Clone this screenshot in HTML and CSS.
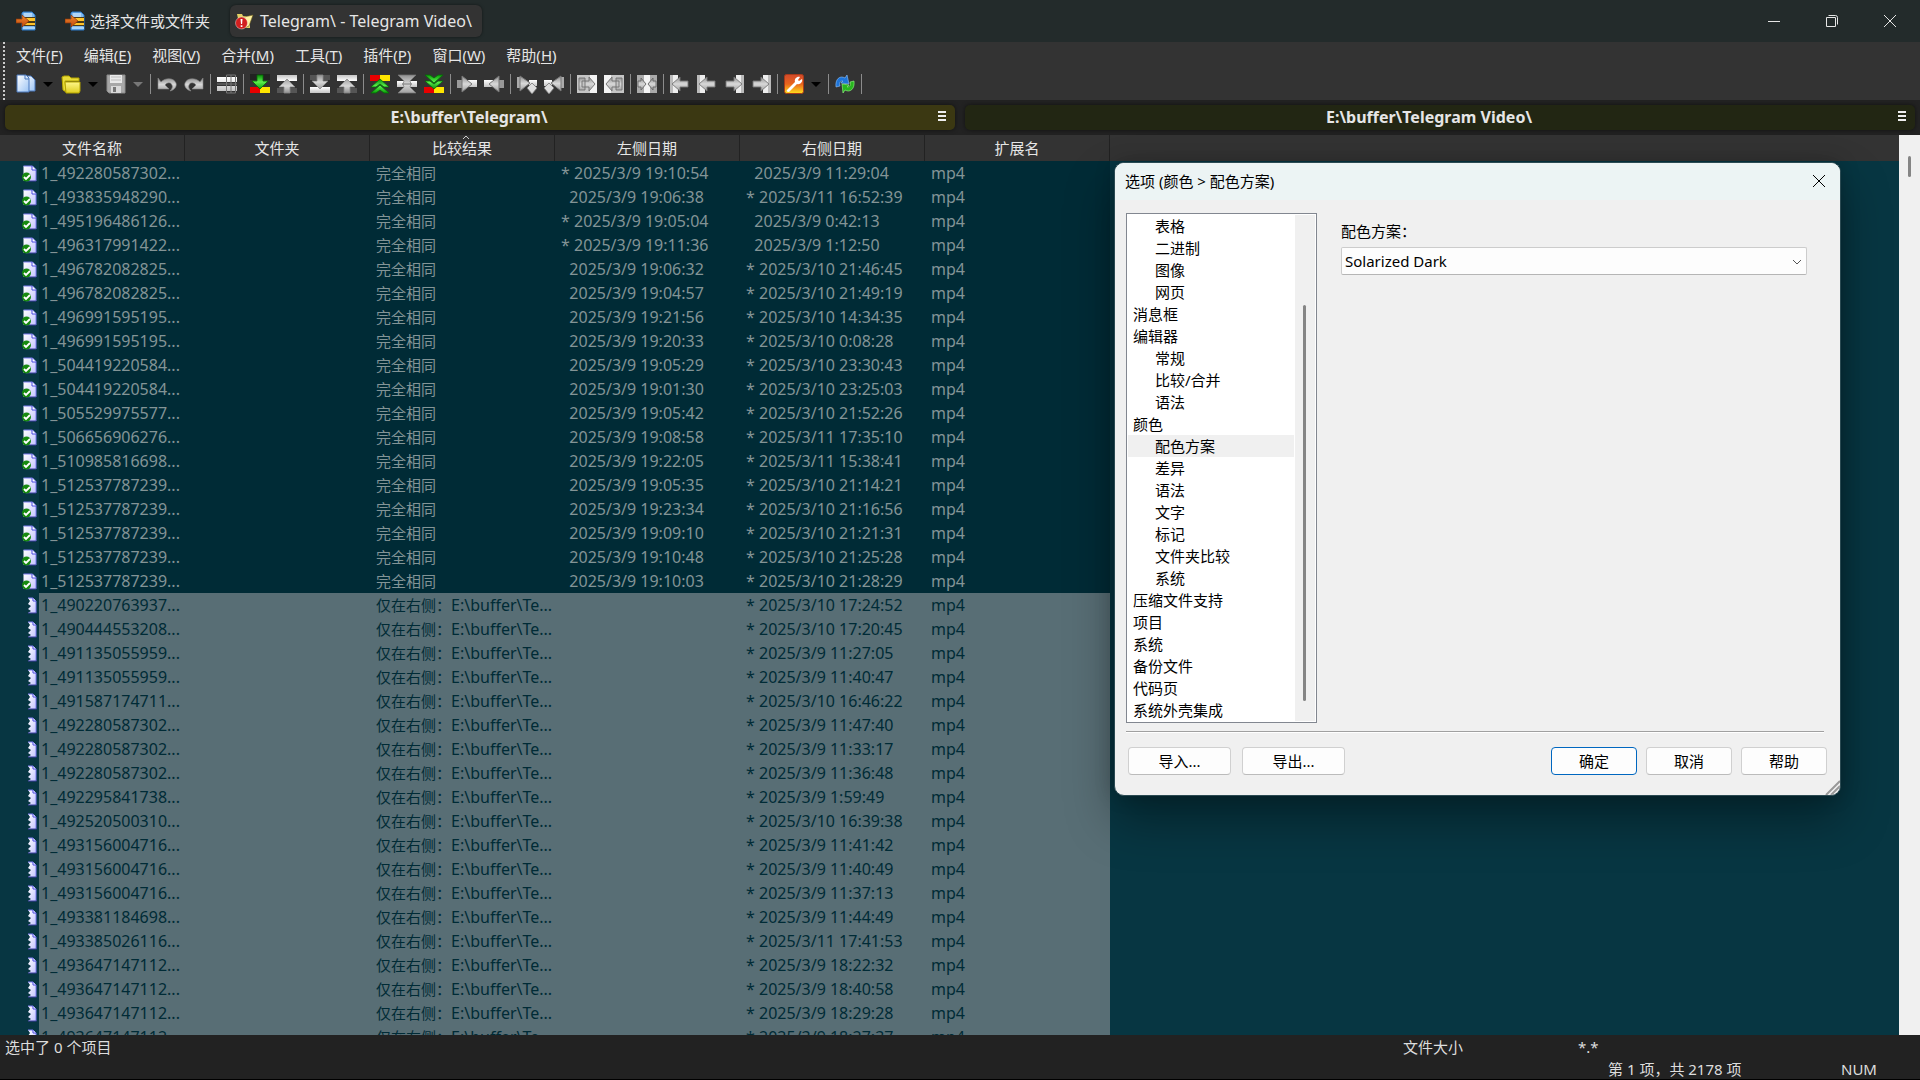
FILE: index.html
```html
<!DOCTYPE html>
<html lang="zh-CN">
<head>
<meta charset="utf-8">
<title>Telegram\ - Telegram Video\</title>
<link rel="stylesheet" href="styles.css">
</head>
<body>
<svg class="sprite" aria-hidden="true">
  <defs>
    <linearGradient id="metal" x1="0" y1="0" x2="0" y2="1"><stop offset="0" stop-color="#8f8f8f"/><stop offset=".5" stop-color="#d8d8d8"/><stop offset="1" stop-color="#a0a0a0"/></linearGradient>
    <linearGradient id="pane" x1="0" y1="0" x2="0" y2="1"><stop offset="0" stop-color="#fff"/><stop offset="1" stop-color="#c4c4c4"/></linearGradient>
    <linearGradient id="green" x1="0" y1="0" x2="0" y2="1"><stop offset="0" stop-color="#0a8a0a"/><stop offset=".5" stop-color="#5cf04c"/><stop offset="1" stop-color="#08a008"/></linearGradient>
    <linearGradient id="sheet" x1="0" y1="0" x2="1" y2="1"><stop offset="0" stop-color="#fff"/><stop offset="1" stop-color="#9cc4f4"/></linearGradient>
    <linearGradient id="gold" x1="0" y1="0" x2="0" y2="1"><stop offset="0" stop-color="#fff68a"/><stop offset="1" stop-color="#e0cf20"/></linearGradient>
    <linearGradient id="fire" x1="0" y1="0" x2="0" y2="1"><stop offset="0" stop-color="#d24a2c"/><stop offset=".5" stop-color="#e8641c"/><stop offset="1" stop-color="#ffe01c"/></linearGradient>
    <linearGradient id="lilac" x1="0" y1="0" x2="1" y2="1"><stop offset="0" stop-color="#fff"/><stop offset="1" stop-color="#c4c4ff"/></linearGradient>
    <linearGradient id="amber" x1="0" y1="0" x2="0" y2="1"><stop offset="0" stop-color="#f08a30"/><stop offset="1" stop-color="#c0480c"/></linearGradient>
    <g id="arrow-down"><path d="M7 1h6v6h5l-8 8-8-8h5z"/></g>
    <g id="chevrons-up"><path d="M10 5l9 8h-5l-4-3-4 3H1zM10 11l9 8h-5l-4-3-4 3H1z"/></g>
  </defs>
  <symbol id="i-app" viewBox="0 0 20 20"><path d="M7 1h9l3 3v15H6V2z" fill="#7db8ee" stroke="#2b78c8"/><path d="M8 3h8M8 5h8" stroke="#e4f2ff"/><path d="M7 16h12v2H7z" fill="#a8d4fa"/><path d="M8 6h11v9H8z" fill="#4a3a18"/><path d="M8 7h11v3H8zM8 12h11v2H8z" fill="#ffc329"/><path d="M0 8h6V4l7 6-7 6v-4H0z" fill="url(#amber)" stroke="#8b3307" stroke-width=".7"/></symbol>
  <symbol id="i-folderdiff" viewBox="0 0 20 20"><path d="M2 3h5l1 2h7v12H5z" fill="#e3cf65"/><path d="M5 7l13-3-4 11-7 3z" fill="#fff3a0" stroke="#6b5d1e" stroke-width=".6"/><circle cx="6.500" cy="12" r="6" fill="#d21f1f" stroke="#fff" stroke-opacity=".4"/><path d="M5.500 8h2l-.4 5H6zM5.700 14.300h1.700V16H5.700z" fill="#fff"/></symbol>
  <symbol id="i-new" viewBox="0 0 20 20"><path d="M8 2h7l4 4v11H8z" fill="url(#sheet)" stroke="#4b79bd"/><path d="M1 1h9l3 3v14H1z" fill="url(#sheet)" stroke="#4b79bd"/><path d="M9 1v4h4" fill="none" stroke="#4b79bd"/></symbol>
  <symbol id="i-open" viewBox="0 0 20 20"><path d="M1 3l2-1h5l2 2h8v3H4l1 11-3-2z" fill="#e8db38" stroke="#b4a400"/><path d="M4 8h15v9l-1 2H5z" fill="url(#gold)" stroke="#b4a400"/></symbol>
  <symbol id="i-save" viewBox="0 0 20 20"><path d="M1 1h18v18H3l-2-2z" fill="#a7a7a7" stroke="#8c8c8c"/><path d="M4 1h12v8H4z" fill="#e8e8e8"/><path d="M5 3h10M5 6h10" stroke="#bbb"/><path d="M5 12h10v7H5z" fill="#d9d9d9"/><path d="M7 13h3v5H7z" fill="#777"/></symbol>
  <symbol id="i-undo" viewBox="0 0 20 20"><path d="M1 4v11h11l-4-4c2-3 6-3 7 0 1 2 0 4-2 6 5-1 7-5 6-8C17 4 9 3 4 8z" fill="url(#metal)" stroke="#888" stroke-width=".6"/></symbol>
  <symbol id="i-redo" viewBox="0 0 20 20"><use href="#i-undo" transform="matrix(-1 0 0 1 20 0)"/></symbol>
  <symbol id="i-panes" viewBox="0 0 20 20"><path d="M0 3h20v5H0zM0 12h20v5H0z" fill="url(#pane)"/><path d="M9.500 1h9v18h-9zM0 10h20M14 1v18" fill="none" stroke="#777"/></symbol>
  <symbol id="i-next" viewBox="0 0 20 20"><path d="M0 0h20v6H0z" fill="#222"/><path d="M0 13h10v6H0z" fill="#e80000"/><path d="M10 13h10v6H10z" fill="#ffe500"/><use href="#arrow-down" fill="url(#green)" stroke="#056b05" stroke-width=".8"/></symbol>
  <symbol id="i-down" viewBox="0 0 20 20"><path d="M0 1h20v5H0z" fill="#555"/><path d="M0 13h20v6H0z" fill="url(#pane)"/><use href="#arrow-down" fill="url(#metal)" stroke="#888" stroke-width=".8"/></symbol>
  <symbol id="i-up" viewBox="0 0 20 20"><use href="#i-down" transform="matrix(1 0 0 -1 0 20)"/></symbol>
  <symbol id="i-first" viewBox="0 0 20 20"><path d="M0 1h10v6H0z" fill="#e80000"/><path d="M10 1h10v6H10z" fill="#ffe500"/><use href="#chevrons-up" fill="url(#green)" stroke="#056b05" stroke-width=".8"/></symbol>
  <symbol id="i-current" viewBox="0 0 20 20"><path d="M0 7h20v6H0z" fill="url(#pane)"/><path d="M1 1h18l-6 6 1 3-1 3 6 6H1l6-6-1-3 1-3z" fill="url(#metal)" stroke="#777" stroke-width=".7"/><path d="M5 10h10" stroke="#777"/></symbol>
  <symbol id="i-last" viewBox="0 0 20 20"><use href="#i-first" transform="matrix(1 0 0 -1 0 20)"/></symbol>
  <symbol id="i-right" viewBox="0 0 20 20"><path d="M0 6h6v8H0z" fill="#999"/><path d="M11 6h9v7h-9z" fill="url(#pane)"/><path d="M5 2l10 8-10 8z" fill="url(#metal)" stroke="#777"/></symbol>
  <symbol id="i-left" viewBox="0 0 20 20"><use href="#i-right" transform="matrix(-1 0 0 1 20 0)"/></symbol>
  <symbol id="i-right-next" viewBox="0 0 20 20"><path d="M0 3h4v11H0z" fill="#aaa"/><path d="M12 6h8v6h-8z" fill="url(#pane)"/><path d="M3 2l10 7-10 8z" fill="url(#metal)" stroke="#777"/><path d="M15 9l5 5-5 6-5-6z" fill="#ddd" stroke="#777" stroke-width=".8"/></symbol>
  <symbol id="i-left-next" viewBox="0 0 20 20"><use href="#i-right-next" transform="matrix(-1 0 0 1 20 0)"/></symbol>
  <symbol id="i-all-right" viewBox="0 0 20 20"><path d="M0 1h20v18H0z" fill="#c5c5c5"/><path d="M13 1h7v18h-7z" fill="#f4f4f4"/><path d="M2 4h6v3H5v6h3v3H2zM8 7h4V3l6 7-6 7v-4H8z" fill="url(#metal)" stroke="#707070" stroke-width=".9"/></symbol>
  <symbol id="i-all-left" viewBox="0 0 20 20"><use href="#i-all-right" transform="matrix(-1 0 0 1 20 0)"/></symbol>
  <symbol id="i-auto" viewBox="0 0 20 20"><path d="M0 1h20v18H0z" fill="#aaa"/><path d="M7 1h6v18H7z" fill="#f4f4f4"/><path d="M1 7h3V4l5 6-5 6v-3H1zM19 7h-3V4l-5 6 5 6v-3h3z" fill="url(#metal)" stroke="#666" stroke-width=".9"/></symbol>
  <symbol id="i-to-left" viewBox="0 0 20 20"><path d="M0 1h3v18H0z" fill="#bbb"/><path d="M3 1h5v18H3z" fill="#eee"/><path d="M2 10l8-7v4h8v6h-8v4z" fill="url(#metal)" stroke="#777" stroke-width=".9"/></symbol>
  <symbol id="i-to-right" viewBox="0 0 20 20"><use href="#i-to-left" transform="matrix(-1 0 0 1 20 0)"/></symbol>
  <symbol id="i-options" viewBox="0 0 20 20"><rect x=".5" y=".5" width="19" height="19" rx="2" fill="url(#fire)" stroke="#a83a1a"/><path d="M3 16l8-8c-1-3 2-6 5-5l-2 3 1 1 3-2c1 3-2 6-5 5l-8 8c-2 0-3-1-2-2z" fill="#fff"/></symbol>
  <symbol id="i-refresh" viewBox="0 0 20 20"><path d="M1 13C0 5 5 1 10 4l2-3 2 9-8-1 2-2C5 7 4 9 5 12z" fill="#1e74d8" stroke="#8fc4ff" stroke-width=".6"/><path d="M19 7c1 8-4 12-9 9l-2 3-1-9 7 1-2 2c3 0 4-2 3-5z" fill="#27b51e" stroke="#9aff8c" stroke-width=".6"/></symbol>
  <symbol id="i-same" viewBox="0 0 15 17"><path d="M1.500 1h9L14 4.500V16H1.500z" fill="url(#lilac)"/><path d="M1.500 1h9L14 4.500V16" fill="none" stroke="#7878f0"/><path d="M10 1v4h4" fill="#fff" stroke="#4848e0"/><path d="M4 16h10" stroke="#3c3ca0"/><circle cx="4.500" cy="12" r="4.500" fill="#178a10"/><path d="M2 12l2 2 4-4" fill="none" stroke="#fff" stroke-width="1.800"/></symbol>
  <symbol id="i-ronly" viewBox="0 0 15 17"><path d="M6 1h5l3 3v12H6l3-2-3-2 3-3-3-2 2-3z" fill="url(#lilac)"/><path d="M6 1h5l3 3v12" fill="none" stroke="#7878f0"/><path d="M11 1v3h3" fill="#fff" stroke="#4848e0"/><path d="M6 16h8.500" stroke="#3c3ca0"/></symbol>
</svg>

<div class="app">
  <header class="titlebar">
    <svg class="icon app-icon"><use href="#i-app"/></svg>
    <nav class="tabs">
      <a class="tab" href="#select"><svg class="icon"><use href="#i-app"/></svg>选择文件或文件夹</a>
      <a class="tab active" href="#compare"><svg class="icon"><use href="#i-folderdiff"/></svg>Telegram\ - Telegram Video\</a>
    </nav>
    <div class="window-buttons">
      <button aria-label="最小化"><svg viewBox="0 0 12 12"><path d="M0 6.500h12"/></svg></button>
      <button aria-label="还原"><svg viewBox="0 0 12 12"><path d="M.5 2.500h9v9h-9zM2.500 .5h7a2 2 0 0 1 2 2v7"/></svg></button>
      <button aria-label="关闭"><svg viewBox="0 0 12 12"><path d="M0 0l12 12M12 0L0 12"/></svg></button>
    </div>
  </header>

  <div class="bars">
    <div class="grip"></div>
    <div class="bar-stack">
      <nav class="menu">
        <a href="#file">文件(<u>F</u>)</a><a href="#edit">编辑(<u>E</u>)</a><a href="#view">视图(<u>V</u>)</a><a href="#merge">合并(<u>M</u>)</a><a href="#tools">工具(<u>T</u>)</a><a href="#plugins">插件(<u>P</u>)</a><a href="#window">窗口(<u>W</u>)</a><a href="#help">帮助(<u>H</u>)</a>
      </nav>
      <div class="toolbar" role="toolbar" aria-label="工具栏">
        <button aria-label="新建"><svg class="icon"><use href="#i-new"/></svg></button><button class="drop" aria-label="新建选项"></button>
        <button aria-label="打开"><svg class="icon"><use href="#i-open"/></svg></button><button class="drop" aria-label="打开选项"></button>
        <button aria-label="保存"><svg class="icon"><use href="#i-save"/></svg></button><button class="drop dim" aria-label="保存选项"></button>
        <i class="sep"></i>
        <button aria-label="撤消"><svg class="icon"><use href="#i-undo"/></svg></button>
        <button aria-label="重做"><svg class="icon"><use href="#i-redo"/></svg></button>
        <i class="sep"></i>
        <button aria-label="选择行差异"><svg class="icon"><use href="#i-panes"/></svg></button>
        <i class="sep"></i>
        <button aria-label="下一处差异"><svg class="icon"><use href="#i-next"/></svg></button>
        <button aria-label="上一处差异"><svg class="icon"><use href="#i-up"/></svg></button>
        <i class="sep"></i>
        <button aria-label="下一处冲突"><svg class="icon"><use href="#i-down"/></svg></button>
        <button aria-label="上一处冲突"><svg class="icon"><use href="#i-up"/></svg></button>
        <i class="sep"></i>
        <button aria-label="第一处差异"><svg class="icon"><use href="#i-first"/></svg></button>
        <button aria-label="当前差异"><svg class="icon"><use href="#i-current"/></svg></button>
        <button aria-label="最后一处差异"><svg class="icon"><use href="#i-last"/></svg></button>
        <i class="sep"></i>
        <button aria-label="复制到右侧"><svg class="icon"><use href="#i-right"/></svg></button>
        <button aria-label="复制到左侧"><svg class="icon"><use href="#i-left"/></svg></button>
        <i class="sep"></i>
        <button aria-label="复制到右侧并前进"><svg class="icon"><use href="#i-right-next"/></svg></button>
        <button aria-label="复制到左侧并前进"><svg class="icon"><use href="#i-left-next"/></svg></button>
        <i class="sep"></i>
        <button aria-label="全部复制到右侧"><svg class="icon"><use href="#i-all-right"/></svg></button>
        <button aria-label="全部复制到左侧"><svg class="icon"><use href="#i-all-left"/></svg></button>
        <i class="sep"></i>
        <button aria-label="自动合并"><svg class="icon"><use href="#i-auto"/></svg></button>
        <i class="sep"></i>
        <button aria-label="第一个文件"><svg class="icon"><use href="#i-to-left"/></svg></button>
        <button aria-label="上一个文件"><svg class="icon"><use href="#i-to-left"/></svg></button>
        <button aria-label="下一个文件"><svg class="icon"><use href="#i-to-right"/></svg></button>
        <button aria-label="最后一个文件"><svg class="icon"><use href="#i-to-right"/></svg></button>
        <i class="sep"></i>
        <button aria-label="选项"><svg class="icon"><use href="#i-options"/></svg></button><button class="drop" aria-label="选项菜单"></button>
        <i class="sep"></i>
        <button aria-label="刷新"><svg class="icon"><use href="#i-refresh"/></svg></button>
        <i class="sep"></i>
      </div>
    </div>
  </div>

  <div class="paths">
    <div class="path left"><span>E:\buffer\Telegram\</span><button aria-label="左侧路径菜单"><svg viewBox="0 0 8 11"><path d="M0 1h8M0 5h8M0 9h8"/></svg></button></div>
    <div class="path right"><span>E:\buffer\Telegram Video\</span><button aria-label="右侧路径菜单"><svg viewBox="0 0 8 11"><path d="M0 1h8M0 5h8M0 9h8"/></svg></button></div>
  </div>

  <main class="content">
    <div class="list">
      <table>
        <colgroup><col class="c-gutter"><col class="c-name"><col class="c-std"><col class="c-std"><col class="c-std"><col class="c-std"><col class="c-std"><col></colgroup>
        <thead>
          <tr><th colspan="2">文件名称</th><th>文件夹</th><th class="sorted">比较结果<svg viewBox="0 0 8 5"><path d="M1 4l3-3 3 3"/></svg></th><th>左侧日期</th><th>右侧日期</th><th>扩展名</th><th class="rest"></th></tr>
        </thead>
        <tbody id="rows"></tbody>
      </table>
    </div>
    <div class="scrollbar"><div class="thumb"></div></div>
  </main>

  <footer class="status">
    <div class="status-row first"><span>选中了 0 个项目</span><span>文件大小</span><span>*.*</span></div>
    <div class="status-row second"><span></span><span>第 1 项，共 2178 项</span><span>NUM</span></div>
  </footer>
</div>

<section class="dialog" role="dialog" aria-labelledby="dialog-title">
  <header class="dialog-title"><h1 id="dialog-title">选项 (颜色 &gt; 配色方案)</h1><button aria-label="关闭"><svg viewBox="0 0 12 12"><path d="M0 0l12 12M12 0L0 12"/></svg></button></header>
  <div class="dialog-body">
    <div class="tree">
      <ul>
        <li class="sub">表格</li><li class="sub">二进制</li><li class="sub">图像</li><li class="sub">网页</li>
        <li>消息框</li><li>编辑器</li>
        <li class="sub">常规</li><li class="sub">比较/合并</li><li class="sub">语法</li>
        <li>颜色</li>
        <li class="sub selected">配色方案</li><li class="sub">差异</li><li class="sub">语法</li><li class="sub">文字</li><li class="sub">标记</li><li class="sub">文件夹比较</li><li class="sub">系统</li>
        <li>压缩文件支持</li><li>项目</li><li>系统</li><li>备份文件</li><li>代码页</li><li>系统外壳集成</li>
      </ul>
      <div class="tree-scroll"><div class="thumb"></div></div>
    </div>
    <div class="page">
      <label for="scheme">配色方案：</label>
      <div class="combo">
        <select id="scheme"><option>Solarized Dark</option></select>
        <svg viewBox="0 0 10 6"><path d="M1 1l4 4 4-4"/></svg>
      </div>
    </div>
  </div>
  <footer class="dialog-foot">
    <button class="wide">导入...</button><button class="wide">导出...</button>
    <button class="ok">确定</button><button>取消</button><button>帮助</button>
  </footer>
  <svg class="resize" viewBox="0 0 15 15"><path d="M1 15L15 1M6 15l9-9M11 15l4-4"/></svg>
</section>
<script src="rows.js"></script>
</body>
</html>
```
FILE: styles.css
```css
* { box-sizing: border-box; }

body {
  margin: 0;
  background: #000;
  color: #e6e6e6;
  font: 15px/20px "Noto Sans", "Noto Sans CJK SC", sans-serif;
}

button, select { font: inherit; color: inherit; }
button { margin: 0; padding: 0; border: 0; background: none; }
a { color: inherit; text-decoration: none; }
.sprite { position: absolute; width: 0; height: 0; }
.icon { width: 20px; height: 20px; flex: none; display: block; }

.app { height: 100vh; display: flex; flex-direction: column; border-bottom: 1px solid #000; }

/* title bar */
.titlebar { height: 42px; flex: none; display: flex; align-items: center; background: #232b2b; padding-left: 16px; }
.tabs { display: flex; align-items: center; gap: 12px; margin-left: 21px; }
.tab { height: 32px; display: flex; align-items: center; gap: 5px; padding: 0 8px; border-radius: 6px; }
.tab.active { background: #333; padding: 0 10px 0 5px; font-size: 16px; box-shadow: 0 0 3px rgba(0, 0, 0, .5); }
.window-buttons { margin-left: auto; display: flex; padding-right: 1px; }
.window-buttons button { width: 58px; height: 42px; display: grid; place-items: center; }
.window-buttons svg { width: 12px; height: 12px; fill: none; stroke: #e6e6e6; }

/* menu and toolbar */
.bars { flex: none; height: 58px; display: flex; background: #333; }
.grip { width: 2px; margin-left: 3px; background: repeating-linear-gradient(#ccc 0 2px, transparent 2px 4px); }
.bar-stack { display: flex; flex-direction: column; flex: 1; }
.menu { display: flex; height: 26px; align-items: center; gap: 21px; padding-left: 11px; }
.menu u { text-underline-offset: 2px; }
.toolbar { display: flex; height: 32px; align-items: center; padding-left: 7px; }
.toolbar button { width: 27px; height: 26px; display: grid; place-items: center; }
.toolbar .drop { width: 18px; }
.drop::after { content: ""; border: 5px solid transparent; border-top-color: #000; border-bottom: 0; }
.drop.dim::after { border-top-color: #777; }
.sep { width: 6px; height: 20px; display: flex; justify-content: center; }
.sep::after { content: ""; width: 1px; background: #8c8c8c; }

/* path headers */
.paths { flex: none; height: 35px; display: flex; gap: 10px; padding: 5px; background: #222; }
.path { flex: 1; display: flex; align-items: center; padding-right: 4px; border-radius: 5px; font-size: 16px; font-weight: 700; box-shadow: 0 0 4px rgba(0, 0, 0, .5); }
.path.left { background: #3b3812; }
.path.right { background: #222613; }
.path span { flex: 1; line-height: 24px; padding-bottom: 1px; text-align: center; }
.path button { display: grid; place-items: center; width: 18px; height: 22px; margin-bottom: 3px; }
.path svg { width: 8px; height: 11px; stroke: #eee; stroke-width: 2; }

/* comparison list */
.content { flex: 1; min-height: 0; display: flex; background: #073642; }
.list { flex: 1; min-width: 0; overflow: hidden; }
table { width: 100%; table-layout: fixed; border-spacing: 0; }
.c-gutter { width: 39px; }
.c-name { width: 146px; }
.c-std { width: 185px; }
th { position: relative; height: 26px; padding: 0; background: #333; border-right: 1px solid #222; font-weight: 400; line-height: 24px; }
th.rest { border: 0; }
.sorted svg { position: absolute; top: 0; left: 50%; width: 8px; height: 5px; fill: none; stroke: #ccc; }
td { height: 24px; padding: 0 0 0 6px; line-height: 24px; white-space: pre; overflow: hidden; }
.same td { background: #002b36; color: #839496; }
.only td { background: #586e75; color: #002b36; }
tbody td.gutter, tbody td.rest { background: none; }
td.gutter { padding: 0 0 0 22px; }
td.gutter svg { width: 15px; height: 17px; display: block; }
td.name { padding-left: 2px; }
td.name, td.date, td.ext, td .path-text { font-size: 16px; }
.scrollbar { width: 21px; background: #f0f0f0; padding-top: 21px; }
.thumb { width: 3px; border-radius: 2px; background: #858585; }
.scrollbar .thumb { height: 21px; margin-left: 9px; }

/* status bar */
.status { flex: none; height: 44px; background: #222; color: #ddd; overflow: hidden; }
.status-row { display: grid; height: 22px; padding-left: 5px; line-height: 24px; }
.first { grid-template-columns: 1fr 175px 342px; }
.second { grid-template-columns: 1fr 233px 79px; }

/* options dialog */
.dialog {
  position: absolute; top: 162px; right: 79px; width: 727px;
  background: #f0f0f0; color: #000; border: 1px solid #2b4a52; border-radius: 10px; overflow: hidden;
  box-shadow: 0 24px 48px rgba(0, 0, 0, .35), 0 0 20px rgba(0, 0, 0, .2);
}
.dialog-title { height: 37px; display: flex; align-items: center; justify-content: space-between; background: #ecf4f4; padding: 0 15px 2px 10px; }
.dialog-title h1 { margin: 0; font-size: 15px; font-weight: 400; }
.dialog-title svg { width: 12px; height: 12px; display: block; stroke: #000; }
.dialog-body { display: flex; gap: 24px; margin: 13px 16px 0 11px; padding-bottom: 8px; border-bottom: 1px solid #a0a0a0; box-shadow: 0 1px #fff; }
.tree { width: 191px; display: flex; padding: 1px; border: 1px solid #828790; background: #fff; }
.tree ul { flex: 1; margin: 0 1px 0 0; padding: 0; list-style: none; }
.tree li { height: 22px; padding-left: 5px; line-height: 22px; }
.tree .sub { padding-left: 27px; }
.tree .selected { background: #f0f0f0; }
.tree-scroll { width: 20px; background: #f0f0f0; padding: 90px 0 20px 8px; }
.tree-scroll .thumb { height: 100%; }
.page { flex: 1; padding: 8px 1px 0 0; }
.page label { display: block; }
.combo { position: relative; margin-top: 6px; }
.combo select { width: 100%; height: 28px; padding: 0 3px; appearance: none; background: #fdfdfd; border: 1px solid #ccc; border-bottom-color: #b5b5b5; border-radius: 2px; }
.combo svg { position: absolute; right: 5px; top: 12px; width: 10px; height: 6px; fill: none; stroke: #555; pointer-events: none; }
.page .combo { width: 466px; }
.dialog-foot { display: flex; gap: 9px; padding: 15px 13px 20px 13px; }
.dialog-foot button { width: 86px; height: 28px; background: #fdfdfd; border: 1px solid #d0d0d0; border-bottom-color: #bbb; border-radius: 4px; }
.dialog-foot .wide { width: 103px; margin-right: 2px; }
.dialog-foot .ok { margin-left: auto; border-color: #0067c0; }
.resize { position: absolute; right: 0; bottom: 0; width: 15px; height: 15px; stroke: #999; stroke-width: 2; }
```
FILE: rows.js
```js
// name | left date | right date
const same = [
  "1_492280587302...|* 2025/3/9 19:10:54|  2025/3/9 11:29:04",
  "1_493835948290...|  2025/3/9 19:06:38|* 2025/3/11 16:52:39",
  "1_495196486126...|* 2025/3/9 19:05:04|  2025/3/9 0:42:13",
  "1_496317991422...|* 2025/3/9 19:11:36|  2025/3/9 1:12:50",
  "1_496782082825...|  2025/3/9 19:06:32|* 2025/3/10 21:46:45",
  "1_496782082825...|  2025/3/9 19:04:57|* 2025/3/10 21:49:19",
  "1_496991595195...|  2025/3/9 19:21:56|* 2025/3/10 14:34:35",
  "1_496991595195...|  2025/3/9 19:20:33|* 2025/3/10 0:08:28",
  "1_504419220584...|  2025/3/9 19:05:29|* 2025/3/10 23:30:43",
  "1_504419220584...|  2025/3/9 19:01:30|* 2025/3/10 23:25:03",
  "1_505529975577...|  2025/3/9 19:05:42|* 2025/3/10 21:52:26",
  "1_506656906276...|  2025/3/9 19:08:58|* 2025/3/11 17:35:10",
  "1_510985816698...|  2025/3/9 19:22:05|* 2025/3/11 15:38:41",
  "1_512537787239...|  2025/3/9 19:05:35|* 2025/3/10 21:14:21",
  "1_512537787239...|  2025/3/9 19:23:34|* 2025/3/10 21:16:56",
  "1_512537787239...|  2025/3/9 19:09:10|* 2025/3/10 21:21:31",
  "1_512537787239...|  2025/3/9 19:10:48|* 2025/3/10 21:25:28",
  "1_512537787239...|  2025/3/9 19:10:03|* 2025/3/10 21:28:29"
];
const rightOnly = [
  "1_490220763937...||* 2025/3/10 17:24:52",
  "1_490444553208...||* 2025/3/10 17:20:45",
  "1_491135055959...||* 2025/3/9 11:27:05",
  "1_491135055959...||* 2025/3/9 11:40:47",
  "1_491587174711...||* 2025/3/10 16:46:22",
  "1_492280587302...||* 2025/3/9 11:47:40",
  "1_492280587302...||* 2025/3/9 11:33:17",
  "1_492280587302...||* 2025/3/9 11:36:48",
  "1_492295841738...||* 2025/3/9 1:59:49",
  "1_492520500310...||* 2025/3/10 16:39:38",
  "1_493156004716...||* 2025/3/9 11:41:42",
  "1_493156004716...||* 2025/3/9 11:40:49",
  "1_493156004716...||* 2025/3/9 11:37:13",
  "1_493381184698...||* 2025/3/9 11:44:49",
  "1_493385026116...||* 2025/3/11 17:41:53",
  "1_493647147112...||* 2025/3/9 18:22:32",
  "1_493647147112...||* 2025/3/9 18:40:58",
  "1_493647147112...||* 2025/3/9 18:29:28",
  "1_493647147112...||* 2025/3/9 18:27:37"
];

function row(line, kind, icon, result) {
  const [name, left, right] = line.split("|");
  return `<tr class="${kind}"><td class="gutter"><svg><use href="#${icon}"/></svg></td>` +
    `<td class="name">${name}</td><td></td><td>${result}</td>` +
    `<td class="date">${left}</td><td class="date">${right}</td>` +
    `<td class="ext">mp4</td><td class="rest"></td></tr>`;
}

document.getElementById("rows").innerHTML =
  same.map(l => row(l, "same", "i-same", "完全相同")).join("") +
  rightOnly.map(l => row(l, "only", "i-ronly", '仅在右侧：<span class="path-text">E:\\buffer\\Te...</span>')).join("");
```
